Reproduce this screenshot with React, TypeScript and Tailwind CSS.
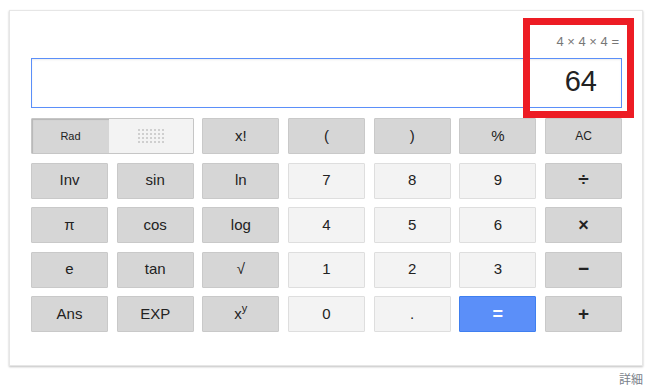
import React from "react";

type Btn = { label: React.ReactNode; kind: "dark" | "light" | "blue"; small?: boolean; op?: boolean; bold?: boolean };

const rows: Btn[][] = [
  [
    { label: "x!", kind: "dark" },
    { label: "(", kind: "dark" },
    { label: ")", kind: "dark" },
    { label: "%", kind: "dark" },
    { label: "AC", kind: "dark", small: true },
  ],
  [
    { label: "Inv", kind: "dark" },
    { label: "sin", kind: "dark" },
    { label: "ln", kind: "dark" },
    { label: "7", kind: "light" },
    { label: "8", kind: "light" },
    { label: "9", kind: "light" },
    { label: "÷", kind: "dark", op: true },
  ],
  [
    { label: "π", kind: "dark" },
    { label: "cos", kind: "dark" },
    { label: "log", kind: "dark" },
    { label: "4", kind: "light" },
    { label: "5", kind: "light" },
    { label: "6", kind: "light" },
    { label: "×", kind: "dark", op: true, bold: true },
  ],
  [
    { label: "e", kind: "dark" },
    { label: "tan", kind: "dark" },
    { label: "√", kind: "dark" },
    { label: "1", kind: "light" },
    { label: "2", kind: "light" },
    { label: "3", kind: "light" },
    { label: "−", kind: "dark", op: true },
  ],
  [
    { label: "Ans", kind: "dark" },
    { label: "EXP", kind: "dark" },
    {
      label: (
        <span className="inline-flex items-start">
          <span>x</span>
          <span className="text-[11px] leading-none relative top-[0px]">y</span>
        </span>
      ),
      kind: "dark",
    },
    { label: "0", kind: "light" },
    { label: ".", kind: "light" },
    { label: "=", kind: "blue" },
    { label: "+", kind: "dark", op: true },
  ],
];

function Button({ b }: { b: Btn }) {
  const base =
    "h-[36px] flex items-center justify-center rounded-[1px] border select-none";
  const kind =
    b.kind === "dark"
      ? "bg-[#d6d6d6] border-[#c9c9c9] text-[#222]"
      : b.kind === "light"
      ? "bg-[#f3f3f3] border-[#dedede] text-[#222]"
      : "bg-[#5b8ff9] border-[#3f7ff0] text-white font-bold text-[18px]";
  const size = b.small
    ? "text-[12px]"
    : b.op
    ? b.bold
      ? "text-[18px] font-bold"
      : "text-[19px] font-semibold"
    : b.kind === "blue"
    ? ""
    : "text-[15px]";
  return <div className={`${base} ${kind} ${size}`}>{b.label}</div>;
}

function Dots() {
  const dots = [];
  for (let i = 0; i < 28; i++) dots.push(<div key={i} className="w-[2px] h-[2px] bg-[#cfcfcf]" />);
  return <div className="grid grid-cols-7 gap-[2px]">{dots}</div>;
}

export default function App() {
  return (
    <div
      className="relative w-[653px] h-[389px] bg-white pl-[9px] pt-[10px]"
      style={{ fontFamily: '"Liberation Sans", Arial, sans-serif' }}
    >
      <div className="w-[634px] h-[356px] border border-[#e6e6e6] shadow-[0_1px_2px_rgba(0,0,0,0.25)] px-[21px] pt-[23px]">
        <div className="h-[16px] leading-[16px] text-[13px] text-[#777] text-right pr-[2px]">
          4 × 4 × 4 =
        </div>
        <div className="mt-[8px] h-[50px] w-[591px] border border-[#5b8ff9] shadow-[inset_0_1px_2px_rgba(0,0,0,0.08)] flex items-center justify-end pr-[24px]">
          <span className="text-[29px] text-[#222] leading-none -mt-[3px]">64</span>
        </div>
        <div className="mt-[10px] w-[591px] grid grid-cols-7 gap-x-[8.67px] gap-y-[8.5px]">
          <div className="col-span-2 h-[36px] flex border border-[#c6c6c6] rounded-[1px]">
            <div className="w-[77px] bg-[#d6d6d6] shadow-[inset_1px_1px_1px_rgba(0,0,0,0.15)] flex items-center justify-center text-[11px] text-[#222]">
              Rad
            </div>
            <div className="flex-1 bg-[#f3f3f3] flex items-center justify-center">
              <Dots />
            </div>
          </div>
          {rows.map((r, i) => r.map((b, j) => <Button key={`${i}-${j}`} b={b} />))}
        </div>
      </div>
      <div
        className="w-[634px] text-right mt-[6px] text-[12px] text-[#7a7f8a] leading-[14px]"
        style={{ fontFamily: '"Noto Sans CJK JP", sans-serif' }}
      >
        詳細
      </div>
      <div className="absolute left-[523px] top-[18px] w-[111px] h-[100px] border-[7px] border-[#ed1c24]" />
    </div>
  );
}
